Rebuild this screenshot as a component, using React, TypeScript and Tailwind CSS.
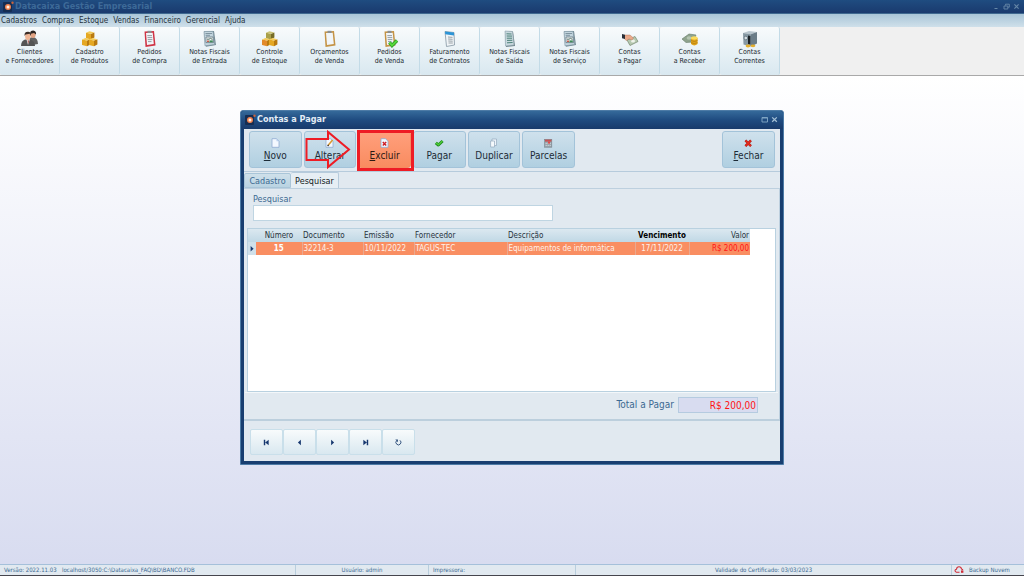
import type { ReactNode } from 'react';

const menu = ['Cadastros', 'Compras', 'Estoque', 'Vendas', 'Financeiro', 'Gerencial', 'Ajuda'];

function LogoIcon() {
  return (
    <svg viewBox="0 0 11 11" className="h-[11px] w-[11px] shrink-0">
      <rect x="0" y="1" width="9" height="10" rx="1" fill="#152d52" />
      <circle cx="5" cy="6" r="3" fill="#f0824f" />
      <circle cx="5" cy="6" r="1.5" fill="#fff1e6" />
      <circle cx="9.5" cy="1.7" r="1.2" fill="#c8643c" />
    </svg>
  );
}

function Box({ x, y, color = '#e5a823', top = '#f3cb5a', side = '#b97a10' }: { x: number; y: number; color?: string; top?: string; side?: string }) {
  return (
    <g transform={`translate(${x} ${y})`}>
      <path d="M0 2 L5 3 V8.6 L0 7.4Z" fill={color} />
      <path d="M5 3 L8.4 1.6 V6.8 L5 8.6Z" fill={side} />
      <path d="M0 2 L3.4 .4 L8.4 1.6 L5 3Z" fill={top} />
    </g>
  );
}

function Sheet({ lines = '#71858a' }: { lines?: string }) {
  return (
    <>
      <path d="M4 1 L12 1.6 L14 16 L5 17Z" fill="#6d8289" />
      <path d="M4 1 L11.5 1.5 L13 15 L4.5 16Z" fill="#c9d9df" stroke="#8da2ad" strokeWidth=".6" />
      <path d="M5.5 3.8 L10.5 4 M5.7 6 L11 6.1 M5.8 8.2 L11 8.2 M6 10.4 L11.3 10.3 M6 12.8 L11.6 12.5" stroke={lines} strokeWidth="1" />
    </>
  );
}

function Invoice() {
  return (
    <>
      <path d="M3 1.5 L13 1 L15 15 L5 16.8Z" fill="#748b94" />
      <path d="M3 1.5 L12 1.4 L13.6 14.6 L4 15.8Z" fill="#c3d5de" stroke="#8399a6" strokeWidth=".7" />
      <path d="M4.5 3.5 H11 M4.7 5.3 H9" stroke="#6d8391" strokeWidth=".8" />
      <path d="M5 7 H12 L12.5 12.6 H5Z" fill="#f4f7f5" stroke="#60757f" strokeWidth=".8" />
      <path d="M6 9.2 H8 L9.5 8.4 L11.4 9.4" stroke="#55726a" strokeWidth="1" fill="none" />
      <path d="M6 11.3 H8" stroke="#c75c4e" strokeWidth="1.6" />
      <path d="M8.4 11.3 H11.8" stroke="#3d8a58" strokeWidth="1.8" />
    </>
  );
}

function Clipboard({ frame, text }: { frame: string; text?: boolean }) {
  return (
    <>
      <path d="M3.5 1.5 L13 1 L14.5 15.5 L4.5 17Z" fill={frame} />
      <path d="M5 3 L11.7 2.7 L12.8 14 L6 15Z" fill="#f1f5f8" />
      <path d="M6.5 .8 H10.5 V3 H6.5Z" fill="#8b8f91" />
      {text && <path d="M6.3 5.6 H11 M6.5 7.6 H11.3 M6.7 9.6 H11.4 M7 11.6 H10.5" stroke="#8a969e" strokeWidth=".9" />}
    </>
  );
}

const tools: { top: string; bottom: string; icon: ReactNode }[] = [
  {
    top: 'Clientes',
    bottom: 'e Fornecedores',
    icon: (
      <>
        <path d="M8 8 L12 7 Q17 8 17 14 L11 15Z" fill="#626262" />
        <ellipse cx="12" cy="4.6" rx="2.7" ry="3.4" fill="#e2a382" />
        <path d="M9 4 Q9 .6 12.3 .6 Q15.5 1 15 4.6 L13 3Z" fill="#2c2522" />
        <path d="M0 16 Q0 11 4 9.6 L9 9.6 Q14 11 14 16Z" fill="#555" />
        <path d="M5.5 9.5 L7 15 L8.8 9.5Z" fill="#e9e9e9" />
        <path d="M6.6 10.5 L7.2 14 L8 10.5Z" fill="#a23a32" />
        <ellipse cx="6.8" cy="6.4" rx="2.7" ry="3.5" fill="#eeb595" />
        <path d="M3.6 6 Q3 1.8 7 1.8 Q10.6 2 9.8 6 L8.6 3.8 L4.6 4.5Z" fill="#3a2c26" />
      </>
    ),
  },
  {
    top: 'Cadastro',
    bottom: 'de Produtos',
    icon: (
      <>
        <Box x={5} y={0.8} />
        <Box x={1} y={7.6} />
        <Box x={8} y={7.6} />
      </>
    ),
  },
  { top: 'Pedidos', bottom: 'de Compra', icon: <Clipboard frame="#cf3445" text /> },
  { top: 'Notas Fiscais', bottom: 'de Entrada', icon: <Invoice /> },
  {
    top: 'Controle',
    bottom: 'de Estoque',
    icon: (
      <>
        <Box x={5} y={0.8} color="#a9a04a" top="#cbc376" side="#766c26" />
        <Box x={1} y={7.6} color="#e28a2a" />
        <Box x={8} y={7.6} />
      </>
    ),
  },
  { top: 'Orçamentos', bottom: 'de Venda', icon: <Clipboard frame="#c49345" /> },
  {
    top: 'Pedidos',
    bottom: 'de Venda',
    icon: (
      <>
        <Clipboard frame="#c49345" text />
        <path d="M8.5 12.5 L11 15.5 L16 10.5" fill="none" stroke="#248f1d" strokeWidth="3.4" />
        <path d="M8.5 12.5 L11 15.5 L16 10.5" fill="none" stroke="#55d83c" strokeWidth="2" />
      </>
    ),
  },
  {
    top: 'Faturamento',
    bottom: 'de Contratos',
    icon: (
      <>
        <path d="M4 1.5 L13 2.5 L13.5 15 L5.5 16.5Z" fill="#f0f4f7" stroke="#8496a2" strokeWidth=".8" />
        <path d="M4 1.5 L13 2.5 V5.5 L4.2 4.2Z" fill="#2c94d6" />
        <path d="M7 7 L11.5 7.4 M7.1 9 L11.6 9.3 M7.3 11 L11.7 11.2 M7.5 13 L11.8 13" stroke="#98a2a8" strokeWidth="1" />
      </>
    ),
  },
  { top: 'Notas Fiscais', bottom: 'de Saída', icon: <Sheet lines="#4c8178" /> },
  { top: 'Notas Fiscais', bottom: 'de Serviço', icon: <Invoice /> },
  {
    top: 'Contas',
    bottom: 'a Pagar',
    icon: (
      <>
        <path d="M6 10 L14 6.5 L17 11.5 L9 15.5Z" fill="#b6c9b1" stroke="#74876f" strokeWidth=".7" />
        <ellipse cx="12" cy="11" rx="2" ry="1.5" fill="#eef3ea" />
        <path d="M3.5 5 L9 5 L12.5 8 L11 10 L8 9 L5.5 10.5 L3.5 9Z" fill="#e9a98a" stroke="#a96d52" strokeWidth=".4" />
        <path d="M1 4 L4 4.8 V9 L1 8.2Z" fill="#2a2f38" />
      </>
    ),
  },
  {
    top: 'Contas',
    bottom: 'a Receber',
    icon: (
      <>
        <path d="M1 9 L8 4 L15 5 L12 12 L5 12.5Z" fill="#8ea38d" stroke="#647a66" strokeWidth=".6" />
        <ellipse cx="8" cy="8" rx="2.4" ry="1.8" fill="#b4c5b1" />
        <path d="M10 8 H16.6 V14 Q13.3 16.8 10 14Z" fill="#e0a31a" />
        <path d="M10 10.5 Q13.3 12.5 16.6 10.5 M10 12.6 Q13.3 14.6 16.6 12.6" stroke="#a8720a" strokeWidth=".6" fill="none" />
        <ellipse cx="13.3" cy="8" rx="3.3" ry="1.7" fill="#fbdb5b" />
      </>
    ),
  },
  {
    top: 'Contas',
    bottom: 'Correntes',
    icon: (
      <>
        <path d="M2 3 L8 1 L16 2 L10 4.2Z" fill="#b8c5cd" />
        <path d="M2 3 L10 4.2 V16.5 L2.5 14.5Z" fill="#8698a3" />
        <path d="M10 4.2 L16 2 V13.6 L10 16.5Z" fill="#6b7d88" />
        <path d="M7 5.5 L9.4 6 V14.5 L7 14Z" fill="#1b2227" />
        <circle cx="4.8" cy="8" r="1.8" fill="#d6e0e5" stroke="#51626c" strokeWidth=".6" />
        <ellipse cx="7" cy="16" rx="2.4" ry="1.4" fill="#e5b02d" />
        <ellipse cx="12" cy="15.8" rx="2.4" ry="1.4" fill="#e5b02d" />
      </>
    ),
  },
];

const page = <path d="M2 .7 H6.5 L9 3.2 V9.3 H2Z" fill="#f3f8ff" stroke="#8fabd2" strokeWidth=".8" />;

const actions: { label: string; hotkey?: boolean; active?: boolean; icon: ReactNode }[] = [
  {
    label: 'Novo',
    hotkey: true,
    icon: (
      <>
        {page}
        <path d="M6.5 .7 V3.2 H9Z" fill="#b9cfee" />
      </>
    ),
  },
  {
    label: 'Alterar',
    icon: (
      <>
        {page}
        <path d="M4 7.5 L8.6 2" stroke="#d9992f" strokeWidth="1.5" />
        <path d="M3.6 8 L4.6 7" stroke="#333" strokeWidth="1.3" />
      </>
    ),
  },
  {
    label: 'Excluir',
    hotkey: true,
    active: true,
    icon: (
      <>
        {page}
        <path d="M3.8 4 L7.2 7.6 M7.2 4 L3.8 7.6" stroke="#cf1f27" strokeWidth="1.4" />
      </>
    ),
  },
  {
    label: 'Pagar',
    icon: (
      <>
        <path d="M1.8 4.8 L4.4 7 L8.6 3" fill="none" stroke="#1c8719" strokeWidth="3" strokeLinejoin="round" />
        <path d="M2 4.8 L4.4 6.8 L8.4 3" fill="none" stroke="#4ecb3a" strokeWidth="1.5" />
      </>
    ),
  },
  {
    label: 'Duplicar',
    icon: (
      <>
        <path d="M4 1 H8.5 V7.5 H4Z" fill="#eef4fa" stroke="#93a9bd" strokeWidth=".7" />
        <path d="M2.6 3 H6.5 V9 H2.6Z" fill="#f5f9fc" stroke="#93a9bd" strokeWidth=".7" />
      </>
    ),
  },
  {
    label: 'Parcelas',
    icon: (
      <>
        <rect x="1.6" y="1.4" width="7.2" height="7.8" fill="#98a3ab" stroke="#77828a" strokeWidth=".6" />
        <rect x="2" y="1.6" width="6.4" height="2" fill="#c65454" />
        <path d="M2.6 5.4 H8 M2.6 7.4 H8" stroke="#d9e0e4" strokeWidth=".9" strokeDasharray="1.2 .8" />
        <rect x="5" y="3.6" width="2" height="2" fill="#e04a4a" />
      </>
    ),
  },
];

const closeIcon = (
  <>
    <path d="M2.4 2.4 L8 8.2 M8 2.4 L2.4 8.2" stroke="#a81e14" strokeWidth="2.4" />
    <path d="M2.6 2.6 L7.8 8 M7.8 2.6 L2.6 8" stroke="#e42a1c" strokeWidth="1.5" />
  </>
);

const columns = [
  { label: 'Número', head: 'text-center font-normal', width: 'w-[46px]' },
  { label: 'Documento', head: 'text-left font-normal', width: 'w-[61px]' },
  { label: 'Emissão', head: 'text-left font-normal', width: 'w-[51px]' },
  { label: 'Fornecedor', head: 'text-left font-normal', width: 'w-[93px]' },
  { label: 'Descrição', head: 'text-left font-normal', width: 'w-[128px]' },
  { label: 'Vencimento', head: 'text-center font-bold text-black', width: 'w-[54px]' },
  { label: 'Valor', head: 'text-right font-normal', width: 'w-[61px]' },
];

const rows = [
  {
    numero: '15',
    documento: '32214-3',
    emissao: '10/11/2022',
    fornecedor: 'TAGUS-TEC',
    descricao: 'Equipamentos de informática',
    vencimento: '17/11/2022',
    valor: 'R$ 200,00',
  },
];

const navButtons: { label: string; icon: ReactNode }[] = [
  { label: 'Primeiro', icon: <path d="M2 2 H3.6 V8 H2Z M7.4 2 V8 L3.6 5Z" fill="#17386f" /> },
  { label: 'Anterior', icon: <path d="M6.5 2 V8 L3.2 5Z" fill="#17386f" /> },
  { label: 'Próximo', icon: <path d="M3.5 2 V8 L6.8 5Z" fill="#17386f" /> },
  { label: 'Último', icon: <path d="M6.4 2 H8 V8 H6.4Z M2.6 2 V8 L6.4 5Z" fill="#17386f" /> },
  {
    label: 'Atualizar',
    icon: (
      <>
        <path d="M6.6 2.6 A2.8 2.8 0 1 1 3 2.8" fill="none" stroke="#35557f" strokeWidth="1.1" />
        <path d="M1.4 1.6 H4.4 V4.6Z" fill="#35557f" />
      </>
    ),
  },
];

function ActionButton({ label, hotkey, active, icon }: { label: string; hotkey?: boolean; active?: boolean; icon: ReactNode }) {
  return (
    <button
      className={
        active
          ? 'flex h-[37px] flex-col items-center gap-[1px] rounded-[3px] border border-[#f58b62] bg-linear-to-b from-[#ff9f7c] to-[#f98c60] pt-[6px] text-[#2b1a14]'
          : 'flex h-[37px] flex-col items-center gap-[1px] rounded-[3px] border border-[#a3c3d9] bg-linear-to-b from-[#cfe1ec] to-[#b0cfe1] pt-[6px] text-[#1c2b36]'
      }
    >
      <svg viewBox="0 0 11 10" className="h-[10px] w-[11px]">{icon}</svg>
      <span className="text-[10px] leading-[14px]">
        {hotkey ? <span className="underline">{label[0]}</span> : label[0]}
        {label.slice(1)}
      </span>
    </button>
  );
}

function Toolbar() {
  return (
    <nav className="flex h-[49px] border-b border-[#a9a9a9] bg-[#f0f0f0]">
      {tools.map((tool) => (
        <button
          key={tool.top + tool.bottom}
          className="flex w-[60px] flex-col items-center rounded-[2px] border-r border-[#c3dbe7] bg-linear-to-b from-[#f8fbfc] to-[#d9e8f0] pt-[3px] text-[7px] leading-[9px] text-[#20282e]"
        >
          <svg viewBox="0 0 18 18" className="h-[18px] w-[18px]">{tool.icon}</svg>
          <span>{tool.top}</span>
          <span className="whitespace-nowrap">{tool.bottom}</span>
        </button>
      ))}
    </nav>
  );
}

function Grid() {
  return (
    <div className="mx-[3px] h-[164px] border border-[#b9d1e0] bg-white">
      <table className="table-fixed border-collapse text-[8px] leading-[13px]">
        <thead>
          <tr className="h-[13px] bg-linear-to-b from-[#dbe8f0] to-[#c0d8e5] text-[#27333c]">
            <th className="w-[8px] p-0" aria-label="Atual" />
            {columns.map((column) => (
              <th key={column.label} className={`${column.width} ${column.head} px-[1px] py-0 whitespace-nowrap`}>
                {column.label}
              </th>
            ))}
          </tr>
        </thead>
        <tbody>
          {rows.map((row) => (
            <tr key={row.numero} className="h-[13px] bg-[#f98e62] whitespace-nowrap text-[#fff0e8]">
              <td className="bg-[#cfe0ea] p-0">
                <svg viewBox="0 0 8 8" className="mx-auto block h-[8px] w-[8px]">
                  <path d="M2.6 1 V6.6 L5.6 3.8Z" fill="#17386f" />
                </svg>
              </td>
              <td className="p-0 text-center font-bold text-white">{row.numero}</td>
              <td className="border-l border-[#e9a98f] px-[1px] py-0">{row.documento}</td>
              <td className="border-l border-[#e9a98f] px-[1px] py-0">{row.emissao}</td>
              <td className="border-l border-[#e9a98f] px-[1px] py-0">{row.fornecedor}</td>
              <td className="border-l border-[#e9a98f] px-[1px] py-0">{row.descricao}</td>
              <td className="border-l border-[#e9a98f] p-0 text-center">{row.vencimento}</td>
              <td className="border-l border-[#e9a98f] px-[1px] py-0 text-right text-[#ff1414]">{row.valor}</td>
            </tr>
          ))}
        </tbody>
      </table>
    </div>
  );
}

function PayablesWindow() {
  return (
    <section className="w-[544px] max-w-full rounded-t-[3px] border border-[#4d7ba6] bg-[#183e70] px-[3px] pb-[3px]">
      <header className="-mx-[3px] flex h-[18px] items-center gap-[1px] rounded-t-[3px] bg-linear-to-b from-[#356a9a] via-[#1f4b80] to-[#183a6b] pr-[5px] pb-[2px] pl-[4px]">
        <LogoIcon />
        <h2 className="text-[9px] leading-[12px] font-bold text-[#e4eef6]">Contas a Pagar</h2>
        <div className="ml-auto flex gap-[3px]">
          <button aria-label="Maximizar">
            <svg viewBox="0 0 7 7" className="h-[7px] w-[7px]">
              <path d="M1 1.5 H6.5 V6 H1Z M1 2 H6.5" fill="none" stroke="#84a9c6" strokeWidth=".9" />
            </svg>
          </button>
          <button aria-label="Fechar janela">
            <svg viewBox="0 0 7 7" className="h-[7px] w-[7px]">
              <path d="M1.2 1.4 L5.8 5.8 M5.8 1.4 L1.2 5.8" stroke="#a5c1d6" strokeWidth="1.3" />
            </svg>
          </button>
        </div>
      </header>

      <div className="bg-[#e1e9f0]">
        <div className="relative flex items-start justify-between border-b border-[#b6cbdc] px-[5px] pt-[2px] pb-[3px]">
          <div className="grid w-[326px] grid-cols-6 gap-[2px]">
            {actions.map((action) => (
              <ActionButton key={action.label} {...action} />
            ))}
          </div>
          <div className="grid w-[53px]">
            <ActionButton label="Fechar" hotkey icon={closeIcon} />
          </div>
          {/* callout pointing at the delete button */}
          <svg viewBox="0 0 46 41" className="pointer-events-none absolute top-0 left-[61px] h-[41px] w-[46px]">
            <path d="M1.5 10 H23 V3 L44 20.5 L23 38 V31 H1.5Z" fill="none" stroke="#ee1c25" strokeWidth="2" />
          </svg>
          <div className="pointer-events-none absolute top-[1px] left-[113px] h-[41px] w-[57px] border-[3px] border-[#ee1c25]" />
        </div>

        <div className="flex h-[16px] text-[9px] leading-[14px]" role="tablist">
          <button role="tab" aria-selected="false" className="mt-[1px] w-[47px] rounded-t-[2px] border border-[#a9c5d8] bg-linear-to-b from-[#cfe0ea] to-[#b9d3e2] text-[#3c6a92]">
            Cadastro
          </button>
          <button role="tab" aria-selected="true" className="w-[48px] rounded-t-[2px] border-t border-r border-[#b6cbdc] bg-[#e6eef4] text-[#141c22]">
            Pesquisar
          </button>
        </div>

        <div className="border-t border-r border-[#bdd0df] pt-[4px]">
          <div className="flex flex-col px-[9px] pb-[7px]">
            <label htmlFor="pesquisar" className="text-[9px] leading-[12px] text-[#3c6a92]">
              Pesquisar
            </label>
            <input id="pesquisar" type="text" className="h-[16px] w-[300px] border border-[#bfd5e2] bg-white px-1 text-[9px] outline-none" />
          </div>
          <Grid />
          <div className="mx-[1px] flex items-center justify-end gap-[4px] border-t border-[#f3f7fa] pt-[4px] pr-[20px] pb-[6px]">
            <label htmlFor="total" className="text-[10px] leading-[14px] text-[#3c6a92]">
              Total a Pagar
            </label>
            <input
              id="total"
              readOnly
              value="R$ 200,00"
              className="h-[16px] w-[80px] border border-[#b5cbe0] bg-[#d8dcf0] px-[1px] text-right text-[10px] leading-[14px] text-[#ff1414] outline-none"
            />
          </div>
        </div>

        <div className="flex border-t-2 border-[#bccfdd] px-[6px] pt-[8px] pb-[6px]">
          {navButtons.map((button) => (
            <button
              key={button.label}
              aria-label={button.label}
              className="flex h-[26px] w-[33px] items-center justify-center rounded-[2px] border border-[#c9dfea] bg-linear-to-b from-[#f8fbfc] to-[#d9e8f0]"
            >
              <svg viewBox="0 0 10 10" className="h-[9px] w-[9px]">{button.icon}</svg>
            </button>
          ))}
        </div>
      </div>
    </section>
  );
}

function StatusBar() {
  return (
    <footer className="flex h-[12px] items-center border-t border-b border-t-[#a5c0da] border-b-[#45454d] bg-[#e1e9f0] text-[6px] leading-[10px] whitespace-nowrap text-[#3c6a92]">
      <span className="w-[62px] pl-[4px]">Versão: 2022.11.03</span>
      <span className="w-[234px] border-r border-[#b9cedd]">localhost/3050:C:\Datacaixa_FAQ\BD\BANCO.FDB</span>
      <span className="w-[133px] border-r border-[#b9cedd] text-center">Usuário: admin</span>
      <span className="w-[147px] border-r border-[#b9cedd] pl-[4px]">Impressora:</span>
      <span className="flex-1 border-r border-[#b9cedd] text-center">Validade do Certificado: 03/03/2023</span>
      <a href="#backup" className="flex w-[72px] items-center gap-[5px] pl-[2px]">
        <svg viewBox="0 0 10 8" className="h-[8px] w-[10px]">
          <path d="M5.5 6.2 H2.4 Q.9 5.8 1 4.4 Q1.2 3.2 2.5 3.2 Q2.8 .8 5 .8 Q7.2 .8 7.5 3 Q8.6 3.2 8.8 4" fill="none" stroke="#d02c38" strokeWidth="1.1" />
          <path d="M7 4.4 H9.4 V6.8 H7Z" fill="#d02c38" />
        </svg>
        Backup Nuvem
      </a>
    </footer>
  );
}

export default function App() {
  return (
    <div className="flex min-h-screen flex-col bg-white font-['DejaVu_Sans_Condensed','DejaVu_Sans',sans-serif]">
      <header className="flex h-[14px] items-center gap-[1px] border-b border-[#3e6890] bg-linear-to-b from-[#1f4c80] to-[#1a3a6e] pr-[4px] pb-[1px] pl-[3px]">
        <LogoIcon />
        <h1 className="text-[9px] leading-[12px] font-bold text-[#3d6a98]">Datacaixa Gestão Empresarial</h1>
        <div className="ml-auto flex gap-[3px]">
          <button aria-label="Minimizar">
            <svg viewBox="0 0 7 7" className="h-[7px] w-[7px]">
              <path d="M1.5 5.5 H4.5" stroke="#6688a8" strokeWidth="1" />
            </svg>
          </button>
          <button aria-label="Restaurar">
            <svg viewBox="0 0 7 7" className="h-[7px] w-[7px]">
              <path d="M2.5 2.5 V1.2 H6.3 V4.2 H4.8 M1 3 H4.8 V6 H1Z" fill="none" stroke="#6688a8" strokeWidth=".9" />
            </svg>
          </button>
          <button aria-label="Fechar">
            <svg viewBox="0 0 7 7" className="h-[7px] w-[7px]">
              <path d="M1.4 1.4 L5.6 5.6 M5.6 1.4 L1.4 5.6" stroke="#6688a8" strokeWidth="1.1" />
            </svg>
          </button>
        </div>
      </header>

      <div className="flex h-[13px] items-center gap-[5px] bg-linear-to-b from-[#a9c5d8] to-[#cfe0ea] pl-[1px] text-[8px] leading-[12px] text-[#24313b]">
        {menu.map((item) => (
          <button key={item}>{item}</button>
        ))}
      </div>

      <Toolbar />

      <main className="flex flex-1 justify-center bg-linear-to-b from-white to-[#d8dcf0] pt-[34px] pb-4">
        <div>
          <PayablesWindow />
        </div>
      </main>

      <StatusBar />
    </div>
  );
}
